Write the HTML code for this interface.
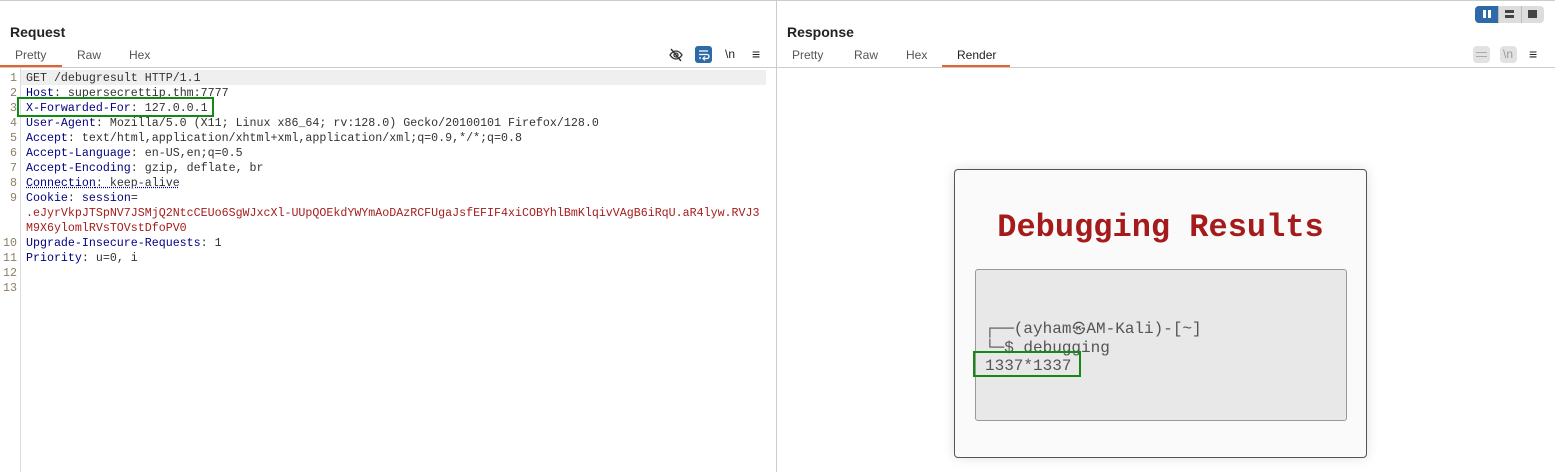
<!DOCTYPE html>
<html><head><meta charset="utf-8"><style>
*{margin:0;padding:0;box-sizing:border-box}
body{width:1555px;height:472px;background:#fff;font-family:"Liberation Sans",sans-serif;position:relative;overflow:hidden;color:#222}
.abs{position:absolute}
.h{font-size:14px;font-weight:bold;color:#222}
.tab{font-size:12px;color:#555;top:48px}
.mono{font-family:"Liberation Mono",monospace;font-size:11.65px;line-height:15px;white-space:pre}
.k{color:#000080}.v{color:#333}.r{color:#a51d1d}
.ln{color:#8c7f66;text-align:right;width:17px;left:0}
</style></head><body>
<div class="abs" style="left:0;top:0;width:1555px;height:1px;background:#ccc"></div>
<div class="abs" style="left:776px;top:0;width:1px;height:472px;background:#ccc"></div>

<div class="abs h" style="left:10px;top:24px">Request</div>
<div class="abs tab" style="left:15px">Pretty</div>
<div class="abs tab" style="left:77px">Raw</div>
<div class="abs tab" style="left:129px">Hex</div>
<div class="abs" style="left:0;top:65px;width:62px;height:2px;background:#e8602c"></div>
<div class="abs" style="left:0;top:67px;width:776px;height:1px;background:#ccc"></div>
<svg class="abs" style="left:668px;top:47px" width="16" height="16" viewBox="0 0 16 16"><path d="M2 8c2-3 4-4 6-4s4 1 6 4c-2 3-4 4-6 4s-4-1-6-4z" fill="none" stroke="#333" stroke-width="1.3"/><circle cx="8" cy="8" r="2" fill="none" stroke="#333" stroke-width="1.3"/><path d="M3 2l10 12" stroke="#333" stroke-width="1.4"/></svg>
<div class="abs" style="left:695px;top:46px;width:17px;height:17px;background:#2f6aa8;border-radius:3px"></div>
<svg class="abs" style="left:695px;top:46px" width="17" height="17"><path d="M4 5h9M4 8.5h8a2 2 0 010 4h-3M4 12h2" stroke="#fff" stroke-width="1.3" fill="none"/><path d="M10 10.5l-2 2 2 2" stroke="#fff" stroke-width="1.2" fill="none"/></svg>
<div class="abs" style="left:725px;top:47px;font-size:12px;color:#222">\n</div>
<div class="abs" style="left:752px;top:46px;font-size:14px;color:#222">≡</div>

<div class="abs" style="left:20px;top:68px;width:1px;height:404px;background:#ddd"></div>
<div class="abs" style="left:21px;top:70px;width:745px;height:15px;background:#efefef"></div>

<div class="abs mono ln" style="top:71px">1
2
3
4
5
6
7
8
9


10
11
12
13</div>
<div class="abs mono" style="left:26px;top:71px"><span class="v">GET /debugresult HTTP/1.1</span>
<span class="k" style="text-decoration:underline">Host</span><span class="v">: supersecrettip.thm:7777</span>
<span class="k">X-Forwarded-For</span><span class="v">: 127.0.0.1</span>
<span class="k">User-Agent</span><span class="v">: Mozilla/5.0 (X11; Linux x86_64; rv:128.0) Gecko/20100101 Firefox/128.0</span>
<span class="k">Accept</span><span class="v">: text/html,application/xhtml+xml,application/xml;q=0.9,*/*;q=0.8</span>
<span class="k">Accept-Language</span><span class="v">: en-US,en;q=0.5</span>
<span class="k">Accept-Encoding</span><span class="v">: gzip, deflate, br</span>
<span class="k" style="text-decoration:underline dotted">Connection</span><span class="v" style="text-decoration:underline dotted #00a">: keep-alive</span>
<span class="k">Cookie</span><span class="v">: </span><span class="k">session</span><span class="v">=</span>
<span class="r">.eJyrVkpJTSpNV7JSMjQ2NtcCEUo6SgWJxcXl-UUpQOEkdYWYmAoDAzRCFUgaJsfEFIF4xiCOBYhlBmKlqivVAgB6iRqU.aR4lyw.RVJ3</span>
<span class="r">M9X6ylomlRVsTOVstDfoPV0</span>
<span class="k">Upgrade-Insecure-Requests</span><span class="v">: 1</span>
<span class="k">Priority</span><span class="v">: u=0, i</span></div>
<div class="abs" style="left:17px;top:97px;width:197px;height:20px;border:2.5px solid #138a13"></div>

<div class="abs h" style="left:787px;top:24px">Response</div>
<div class="abs tab" style="left:792px">Pretty</div>
<div class="abs tab" style="left:854px">Raw</div>
<div class="abs tab" style="left:906px">Hex</div>
<div class="abs tab" style="left:957px;color:#222">Render</div>
<div class="abs" style="left:942px;top:65px;width:68px;height:2px;background:#e8602c"></div>
<div class="abs" style="left:777px;top:67px;width:778px;height:1px;background:#ccc"></div>

<div class="abs" style="left:1475px;top:6px;width:69px;height:17px;background:#ddd;border-radius:4px"></div>
<div class="abs" style="left:1475px;top:6px;width:23px;height:17px;background:#2f6aa8;border-radius:4px 0 0 4px"></div>
<div class="abs" style="left:1483px;top:10px;width:3px;height:8px;background:#fff"></div>
<div class="abs" style="left:1488px;top:10px;width:3px;height:8px;background:#fff"></div>
<div class="abs" style="left:1498px;top:6px;width:1px;height:17px;background:#bbb"></div>
<div class="abs" style="left:1521px;top:6px;width:1px;height:17px;background:#bbb"></div>
<div class="abs" style="left:1505px;top:10px;width:9px;height:3px;background:#444"></div>
<div class="abs" style="left:1505px;top:15px;width:9px;height:3px;background:#444"></div>
<div class="abs" style="left:1528px;top:10px;width:9px;height:8px;background:#444"></div>
<div class="abs" style="left:1473px;top:46px;width:17px;height:17px;background:#e2e2e2;border-radius:4px"></div>
<div class="abs" style="left:1500px;top:46px;width:17px;height:17px;background:#e2e2e2;border-radius:4px"></div>
<div class="abs" style="left:1503px;top:47px;font-size:12px;color:#999">\n</div>
<div class="abs" style="left:1476px;top:52px;width:11px;height:1px;background:#aaa"></div>
<div class="abs" style="left:1476px;top:56px;width:11px;height:1px;background:#aaa"></div>
<div class="abs" style="left:1529px;top:46px;font-size:14px;color:#222">≡</div>

<div class="abs" style="left:954px;top:169px;width:413px;height:289px;background:#fafafa;border:1px solid #555;border-radius:4px;box-shadow:0 0 12px rgba(0,0,0,.12)"></div>
<div class="abs" style="left:954px;top:209px;width:413px;text-align:center;font-family:'Liberation Mono',monospace;font-weight:bold;font-size:32px;color:#a51b1b">Debugging Results</div>
<div class="abs" style="left:975px;top:269px;width:372px;height:152px;background:#e8e8e8;border:1px solid #999;border-radius:3px"></div>
<div class="abs" style="left:985px;top:320px;font-family:'Liberation Mono','DejaVu Sans Mono',monospace;font-size:16px;line-height:18px;color:#555;white-space:pre">┌──(ayham<span style="display:inline-block;width:15px;font-size:13px;text-align:center;font-family:'DejaVu Sans',sans-serif">㉿</span>AM-Kali)-[~]
└─$ debugging
1337*1337</div>
<div class="abs" style="left:973px;top:351px;width:108px;height:26px;border:2.5px solid #138a13"></div>
</body></html>
